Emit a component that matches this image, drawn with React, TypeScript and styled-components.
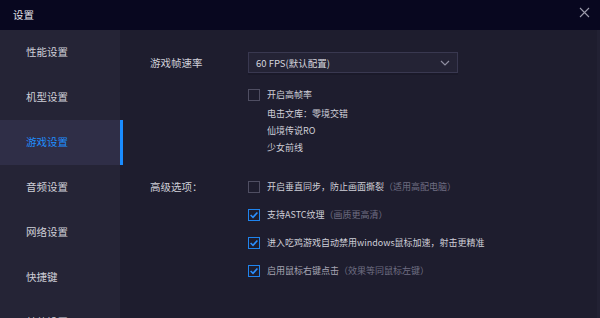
import React from 'react'
import styled, { createGlobalStyle } from 'styled-components'

const GlobalStyle = createGlobalStyle`
  html, body {
    margin: 0;
    padding: 0;
    background: #1e1d2e;
  }
  * {
    box-sizing: border-box;
  }
`

const menuItems = ['性能设置', '机型设置', '游戏设置', '音频设置', '网络设置', '快捷键', '其他设置']

const subGames = ['电击文库：零境交错', '仙境传说RO', '少女前线']

const advancedOptions = [
  { text: '开启垂直同步，防止画面撕裂', hint: '（适用高配电脑）', checked: false, dim: false },
  { text: '支持ASTC纹理', hint: '（画质更高清）', checked: true, dim: false },
  { text: '进入吃鸡游戏自动禁用windows鼠标加速，射击更精准', hint: '', checked: true, dim: false },
  { text: '启用鼠标右键点击', hint: '（效果等同鼠标左键）', checked: true, dim: true },
]

function CheckBox({ checked }: { checked: boolean }) {
  return (
    <Box $checked={checked}>
      {checked && (
        <svg width="10" height="10" viewBox="0 0 10 10">
          <path d="M1.6 5 L4 7.3 L8.4 2.5" fill="none" stroke="#2b8fff" strokeWidth="1.6" />
        </svg>
      )}
    </Box>
  )
}

export default function App() {
  return (
    <>
      <GlobalStyle />
      <Window>
        <TitleBar>
          <Title>设置</Title>
          <CloseButton>
            <svg width="11" height="11" viewBox="0 0 11 11">
              <path d="M1 1 L10 10 M10 1 L1 10" stroke="#9c9bab" strokeWidth="1.1" />
            </svg>
          </CloseButton>
        </TitleBar>
        <Body>
          <Sidebar>
            {menuItems.map((item, i) => (
              <MenuItem key={item} $active={i === 2}>
                {item}
              </MenuItem>
            ))}
          </Sidebar>
          <Main>
            <Section>
              <Label>游戏帧速率</Label>
              <Field>
                <Select>
                  <span>60 FPS(默认配置)</span>
                  <svg width="10" height="6" viewBox="0 0 10 6">
                    <path d="M1 1 L5 5 L9 1" fill="none" stroke="#8f8ea0" strokeWidth="1.2" />
                  </svg>
                </Select>
                <OptionRow $top={11}>
                  <CheckBox checked={false} />
                  <OptionText>开启高帧率</OptionText>
                </OptionRow>
                <SubList>
                  {subGames.map((g) => (
                    <SubItem key={g}>{g}</SubItem>
                  ))}
                </SubList>
              </Field>
            </Section>
            <Section $top={20}>
              <Label>高级选项：</Label>
              <Field>
                <OptionList>
                  {advancedOptions.map((o) => (
                    <OptionRow key={o.text}>
                      <CheckBox checked={o.checked} />
                      <OptionText $dim={o.dim}>
                        {o.text}
                        {o.hint && <Hint>{o.hint}</Hint>}
                      </OptionText>
                    </OptionRow>
                  ))}
                </OptionList>
              </Field>
            </Section>
          </Main>
        </Body>
      </Window>
    </>
  )
}

const Window = styled.div`
  width: 600px;
  height: 318px;
  display: flex;
  flex-direction: column;
  overflow: hidden;
  font-family: 'Microsoft YaHei', 'Noto Sans CJK SC', 'Noto Sans', sans-serif;
  font-size: 9px;
  color: #cfcfd8;
`

const TitleBar = styled.div`
  height: 30px;
  flex-shrink: 0;
  display: flex;
  align-items: center;
  justify-content: space-between;
  padding: 0 10px 2px 13px;
  background: #08071f;
`

const Title = styled.div`
  font-size: 10.5px;
  color: #e2e2ea;
`

const CloseButton = styled.div`
  display: flex;
  align-items: center;
  margin-top: -3px;
`

const Body = styled.div`
  flex: 1;
  display: flex;
  min-height: 0;
`

const Sidebar = styled.div`
  width: 120px;
  flex-shrink: 0;
  background: #252436;
  display: flex;
  flex-direction: column;
`

const MenuItem = styled.div<{ $active?: boolean }>`
  position: relative;
  height: 45px;
  flex-shrink: 0;
  display: flex;
  align-items: center;
  padding-left: 26px;
  padding-bottom: 2px;
  font-size: 10.5px;
  color: ${(p) => (p.$active ? '#1f8fff' : '#cfcfd8')};
  background: ${(p) => (p.$active ? '#2f2e47' : 'transparent')};

  &::after {
    content: '';
    display: ${(p) => (p.$active ? 'block' : 'none')};
    position: absolute;
    top: 0;
    right: -3px;
    width: 3px;
    height: 100%;
    background: #1a8cff;
  }
`

const Main = styled.div`
  flex: 1;
  background: #1e1d2e;
  padding: 22px 0 0 30px;
  border-right: 3px solid #222133;
`

const Section = styled.div<{ $top?: number }>`
  display: flex;
  margin-top: ${(p) => p.$top || 0}px;
`

const Label = styled.div`
  width: 98px;
  flex-shrink: 0;
  line-height: 21px;
  font-size: 10.5px;
  color: #cfcfd8;
`

const Field = styled.div`
  display: flex;
  flex-direction: column;
`

const Select = styled.div`
  width: 210px;
  height: 21px;
  display: flex;
  align-items: center;
  justify-content: space-between;
  padding: 0 7px 0 7px;
  background: #242335;
  border: 1px solid #393850;
  box-shadow: 0 2px 0 #1a1929;
  font-size: 9.5px;
  color: #d6d6de;

  svg {
    margin-top: 1px;
  }
`

const OptionList = styled.div`
  display: flex;
  flex-direction: column;
  gap: 7px;
`

const OptionRow = styled.div<{ $top?: number }>`
  display: flex;
  align-items: center;
  height: 21px;
  margin-top: ${(p) => p.$top || 0}px;
`

const Box = styled.div<{ $checked: boolean }>`
  width: 12px;
  height: 12px;
  flex-shrink: 0;
  display: flex;
  align-items: center;
  justify-content: center;
  border: 1px solid ${(p) => (p.$checked ? '#1f84ee' : '#4f4e62')};
  background: #1e1d2e;
  margin-right: 7px;
`

const OptionText = styled.div<{ $dim?: boolean }>`
  color: ${(p) => (p.$dim ? '#a6a5b3' : '#cfcfd8')};
  white-space: nowrap;
`

const Hint = styled.span`
  color: #6f6e82;
`

const SubList = styled.div`
  display: flex;
  flex-direction: column;
  padding-left: 19px;
`

const SubItem = styled.div`
  height: 17px;
  line-height: 17px;
  color: #cfcfd8;
`
